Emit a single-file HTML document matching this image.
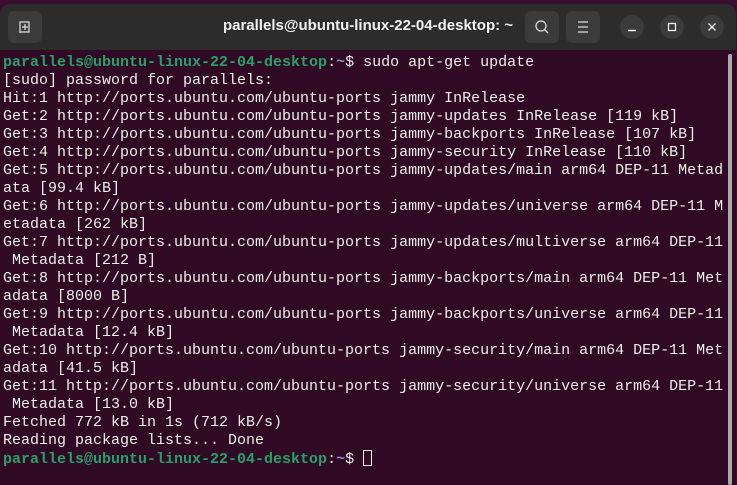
<!DOCTYPE html>
<html><head><meta charset="utf-8"><style>
html,body{margin:0;padding:0;width:737px;height:485px;overflow:hidden;background:#3a0c2e;}
.win{position:absolute;left:0;top:4px;width:736px;height:481px;border-radius:10px 10px 0 0;overflow:hidden;background:#300a24;}
.bar{position:absolute;left:0;top:0;width:736px;height:46px;background:#2c2c2c;}
.btn{position:absolute;top:7px;width:34px;height:32px;background:#3b3b3b;border-radius:6px;}
.circ{position:absolute;top:11px;width:24px;height:24px;border-radius:50%;background:#3b3b3b;}
.title{position:absolute;left:0;right:0;top:13px;text-align:center;color:#f2f2f2;font:bold 15px "Liberation Sans",sans-serif;padding-left:0;}
.term{position:absolute;left:3px;top:50px;margin:0;font:15px/18px "Liberation Mono",monospace;color:#eeeeec;white-space:pre;}
.g{color:#26a269;font-weight:bold;}
.b{color:#8090c8;font-weight:bold;}
.cur{display:inline-block;width:9px;height:16px;border:1px solid #eee;box-sizing:border-box;vertical-align:-3px;}
.sb{position:absolute;left:728px;top:50px;width:4px;height:431px;background:#aaa;border-radius:2px;}
</style></head><body>
<div class="win">
<div class="bar">
 <div class="btn" style="left:8px"><svg width="34" height="32"><path d="M12 11h9v10h-9zM12 11v11M17 13v6M14 16h6" stroke="#ddd" stroke-width="1.2" fill="none"/></svg></div>
 <div class="title">parallels@ubuntu-linux-22-04-desktop: ~</div>
 <div class="btn" style="left:525px"><svg width="34" height="32"><circle cx="16" cy="15" r="5" stroke="#ddd" stroke-width="1.3" fill="none"/><path d="M19.5 18.5l3.5 3.5" stroke="#ddd" stroke-width="1.3"/></svg></div>
 <div class="btn" style="left:566px"><svg width="34" height="32"><path d="M12 11h10M12 16h10M12 21h10" stroke="#ddd" stroke-width="1.2"/></svg></div>
 <div class="circ" style="left:620px"><svg width="24" height="24"><path d="M8 15.5h8" stroke="#eee" stroke-width="1.4"/></svg></div>
 <div class="circ" style="left:660px"><svg width="24" height="24"><rect x="8.5" y="8.5" width="7" height="7" stroke="#eee" stroke-width="1.3" fill="none"/></svg></div>
 <div class="circ" style="left:700px"><svg width="24" height="24"><path d="M8.5 8.5l7 7M15.5 8.5l-7 7" stroke="#eee" stroke-width="1.3"/></svg></div>
</div>
<div class="sb"></div>
<pre class="term"><span class="g">parallels@ubuntu-linux-22-04-desktop</span>:<span class="b">~</span>$ sudo apt-get update
[sudo] password for parallels:
Hit:1 http://ports.ubuntu.com/ubuntu-ports jammy InRelease
Get:2 http://ports.ubuntu.com/ubuntu-ports jammy-updates InRelease [119 kB]
Get:3 http://ports.ubuntu.com/ubuntu-ports jammy-backports InRelease [107 kB]
Get:4 http://ports.ubuntu.com/ubuntu-ports jammy-security InRelease [110 kB]
Get:5 http://ports.ubuntu.com/ubuntu-ports jammy-updates/main arm64 DEP-11 Metad
ata [99.4 kB]
Get:6 http://ports.ubuntu.com/ubuntu-ports jammy-updates/universe arm64 DEP-11 M
etadata [262 kB]
Get:7 http://ports.ubuntu.com/ubuntu-ports jammy-updates/multiverse arm64 DEP-11
 Metadata [212 B]
Get:8 http://ports.ubuntu.com/ubuntu-ports jammy-backports/main arm64 DEP-11 Met
adata [8000 B]
Get:9 http://ports.ubuntu.com/ubuntu-ports jammy-backports/universe arm64 DEP-11
 Metadata [12.4 kB]
Get:10 http://ports.ubuntu.com/ubuntu-ports jammy-security/main arm64 DEP-11 Met
adata [41.5 kB]
Get:11 http://ports.ubuntu.com/ubuntu-ports jammy-security/universe arm64 DEP-11
 Metadata [13.0 kB]
Fetched 772 kB in 1s (712 kB/s)
Reading package lists... Done
<span class="g">parallels@ubuntu-linux-22-04-desktop</span>:<span class="b">~</span>$ <span class="cur"></span></pre>
</div>
</body></html>
